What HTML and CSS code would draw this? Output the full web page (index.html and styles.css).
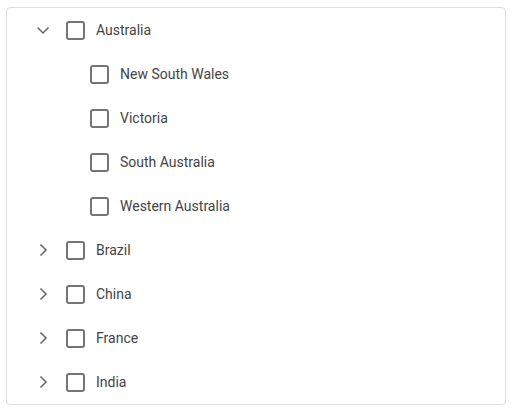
FILE: index.html
```html
<!DOCTYPE html>
<html>
<head>
<meta charset="utf-8">
<link rel="stylesheet" href="styles.css">
</head>
<body>
<div class="tree">
  <div class="row">
    <svg class="arrow" viewBox="0 0 16 16"><polyline points="2.5,5.5 8,11 13.5,5.5"/></svg>
    <span class="check"></span><span class="label">Australia</span>
  </div>
  <div class="row child">
    <span class="arrow"></span><span class="check"></span><span class="label">New South Wales</span>
  </div>
  <div class="row child">
    <span class="arrow"></span><span class="check"></span><span class="label">Victoria</span>
  </div>
  <div class="row child">
    <span class="arrow"></span><span class="check"></span><span class="label">South Australia</span>
  </div>
  <div class="row child">
    <span class="arrow"></span><span class="check"></span><span class="label">Western Australia</span>
  </div>
  <div class="row">
    <svg class="arrow" viewBox="0 0 16 16"><polyline points="5.5,2.5 11,8 5.5,13.5"/></svg>
    <span class="check"></span><span class="label">Brazil</span>
  </div>
  <div class="row">
    <svg class="arrow" viewBox="0 0 16 16"><polyline points="5.5,2.5 11,8 5.5,13.5"/></svg>
    <span class="check"></span><span class="label">China</span>
  </div>
  <div class="row">
    <svg class="arrow" viewBox="0 0 16 16"><polyline points="5.5,2.5 11,8 5.5,13.5"/></svg>
    <span class="check"></span><span class="label">France</span>
  </div>
  <div class="row">
    <svg class="arrow" viewBox="0 0 16 16"><polyline points="5.5,2.5 11,8 5.5,13.5"/></svg>
    <span class="check"></span><span class="label">India</span>
  </div>
</div>
</body>
</html>
```
FILE: styles.css
```css
html, body {
  margin: 0;
  padding: 0;
  background: #fff;
}
body {
  font-family: Roboto, "Liberation Sans", sans-serif;
}
.tree {
  box-sizing: border-box;
  margin: 7px 0 0 6px;
  width: 500px;
  border: 1px solid #dedede;
  border-radius: 4px;
  padding: 0;
}
.row {
  display: flex;
  align-items: center;
  height: 44px;
  padding-left: 28px;
}
.row.child {
  padding-left: 52px;
}
.arrow {
  display: block;
  width: 16px;
  height: 16px;
  flex: none;
  margin-right: 15px;
  fill: none;
  stroke: #666;
  stroke-width: 1.5;
}
.check {
  box-sizing: border-box;
  width: 19px;
  height: 19px;
  flex: none;
  border: 2px solid #757575;
  border-radius: 3px;
  margin-right: 11px;
}
.label {
  font-size: 14px;
  color: #444;
  line-height: 20px;
}
```
